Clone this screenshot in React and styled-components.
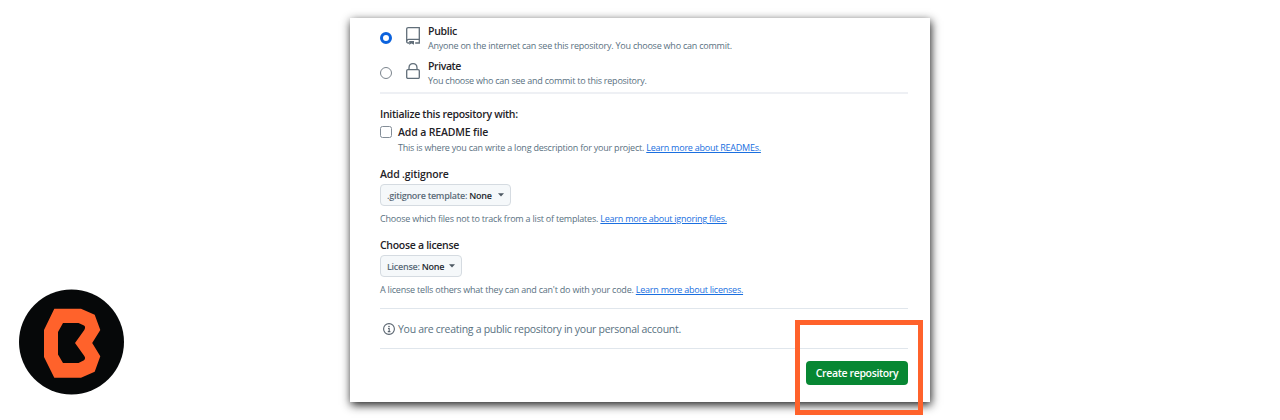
import React from "react";
import styled, { createGlobalStyle } from "styled-components";

const GlobalStyle = createGlobalStyle`
  * { box-sizing: border-box; }
  body {
    margin: 0;
    background: #fff;
    font-family: "Open Sans", "Noto Sans", sans-serif;
    color: #1f2328;
  }
  svg { display: block; flex: none; }
`;

const Page = styled.main`
  position: relative;
  width: 1280px;
  height: 420px;
  padding: 18px 350px;
  overflow: hidden;
`;

const Logo = styled.svg`
  position: absolute;
  left: 19px;
  top: 289px;
`;

const Panel = styled.section`
  width: 580px;
  height: 384px;
  padding: 5px 22px 0 30px;
  background: #fff;
  box-shadow: 1px 3px 9px rgba(0, 0, 0, 0.9);
`;

const Title = styled.div`
  height: 15px;
  line-height: 15px;
  font-size: 10.5px;
  font-weight: 600;
  letter-spacing: ${(p) => p.$track ?? -0.3}px;
  white-space: nowrap;
`;

const Note = styled.div`
  height: 14px;
  line-height: 14px;
  font-size: 9px;
  color: #59717f;
  letter-spacing: ${(p) => p.$track ?? -0.21}px;
  white-space: nowrap;
`;

const Link = styled.a`
  color: #1a6fe0;
  text-decoration: underline;
  text-underline-offset: 1px;
  letter-spacing: -0.24px;
`;

const Option = styled.label`
  display: grid;
  grid-template-columns: 26px 22px 1fr;
  align-items: center;
  height: 30px;
  margin-bottom: ${(p) => (p.$last ? 4 : 5)}px;
  svg { margin-bottom: 4px; }
`;

const Radio = styled.span`
  width: 12px;
  height: 12px;
  border-radius: 50%;
  background: #fff;
  border: ${(p) => (p.$on ? "3.5px solid #0b62dd" : "1px solid #7b848d")};
`;

const Divider = styled.hr`
  height: ${(p) => p.$h || 1}px;
  margin: 0;
  border: 0;
  background: ${(p) => p.$color || "#e0e6ec"};
`;

const Group = styled.div`
  margin-top: ${(p) => p.$top}px;
`;

const CheckRow = styled.label`
  display: grid;
  grid-template-columns: 18px 1fr;
  margin-top: 3px;
`;

const CheckText = styled.div`
  display: grid;
  gap: 1px;
`;

const Checkbox = styled.span`
  width: 12px;
  height: 12px;
  margin-top: 1px;
  border: 1px solid #838d97;
  border-radius: 2.5px;
  background: #fff;
`;

const Select = styled.button`
  display: flex;
  align-items: center;
  justify-content: space-between;
  width: ${(p) => p.$w}px;
  height: 22px;
  margin: 2px 0 6px;
  padding: 0 6px;
  border: 1px solid #d5dbe1;
  border-radius: 4px;
  background: #f5f8fa;
  font: 600 9px "Open Sans", "Noto Sans", sans-serif;
  letter-spacing: -0.27px;
  color: #5b6b78;
  white-space: nowrap;
  b { font-weight: 600; color: #24292f; }
`;

const Info = styled.div`
  display: flex;
  align-items: center;
  gap: 3px;
  height: 39px;
  padding: 1px 0 0 3px;
  font-size: 10.5px;
  line-height: 14px;
  letter-spacing: -0.28px;
  color: #59717f;
  white-space: nowrap;
  span { padding-bottom: 1px; }
`;

const Actions = styled.div`
  display: flex;
  justify-content: flex-end;
  padding-top: 12px;
`;

const Submit = styled.button`
  width: 102px;
  height: 24px;
  padding: 0;
  border: 0;
  border-radius: 4px;
  background: #078733;
  color: #fff;
  font: 600 10.5px/24px "Open Sans", "Noto Sans", sans-serif;
  letter-spacing: -0.35px;
  white-space: nowrap;
`;

const Highlight = styled.div`
  position: absolute;
  left: 795px;
  top: 320px;
  width: 128px;
  height: 95px;
  border: 5px solid #ff622b;
`;

const RepoIcon = () => (
  <svg width="14" height="18" viewBox="0 0 14 18" fill="none" stroke="#616e79" strokeWidth="1.3">
    <path d="M3 16H2.2Q.7 16 .7 14.5V2.2Q.7.7 2.2.7H13.3V16H9.2" />
    <path d="M.7 14.2Q.8 12.4 2.6 12.4H13.3" />
    <path d="M3.2 14H8V17.8L5.6 16.4 3.2 17.8Z" fill="#616e79" stroke="none" />
  </svg>
);

const LockIcon = () => (
  <svg width="14" height="16" viewBox="0 0 14 16" fill="none" stroke="#616e79" strokeWidth="1.3">
    <rect x=".7" y="6.6" width="12.6" height="8.8" rx="1.2" />
    <path d="M3 6.6V4.7Q3.2.7 7 .7T11 4.7V6.6" />
  </svg>
);

const InfoIcon = () => (
  <svg width="12" height="12" viewBox="0 0 12 12" fill="none" stroke="#59646f" strokeWidth="1.1">
    <circle cx="6" cy="6" r="5.4" />
    <path d="M5 5.5H6.2V8.5M4.8 8.6H7.4" />
    <circle cx="6" cy="3.6" r=".8" fill="#59646f" stroke="none" />
  </svg>
);

const Caret = () => (
  <svg width="6" height="4" viewBox="0 0 6 4">
    <path d="M0 .3H6L3 3.5Z" fill="#4c5862" />
  </svg>
);

export default function App() {
  return (
    <>
      <GlobalStyle />
      <Page>
        <Logo width="106" height="106" viewBox="0 0 106 106">
          <circle cx="52.5" cy="53" r="52.5" fill="#060809" />
          <path
            fillRule="evenodd"
            fill="#ff622b"
            d="M35.3 19.7H62L75.7 25.7 81.3 41 73.2 54 81.3 67.3 75.7 82.7 62 88.8H35.3L25 68V41ZM44 34L39 43V65.5L44 74H59.5L65 71.3Q67 69.5 65.3 67L56 54 65.3 41Q67 38 65 36.6L59.5 34Z"
          />
        </Logo>
        <Panel>
          <Option>
            <Radio $on />
            <RepoIcon />
            <div>
              <Title>Public</Title>
              <Note $track={-0.23}>Anyone on the internet can see this repository. You choose who can commit.</Note>
            </div>
          </Option>
          <Option $last>
            <Radio />
            <LockIcon />
            <div>
              <Title $track={-0.4}>Private</Title>
              <Note $track={-0.24}>You choose who can see and commit to this repository.</Note>
            </div>
          </Option>
          <Divider $h={2} $color="#eef0f4" />
          <Group $top={13}>
            <Title>Initialize this repository with:</Title>
            <CheckRow>
              <Checkbox />
              <CheckText>
                <Title $track={-0.15}>Add a README file</Title>
                <Note $track={-0.22}>
                  This is where you can write a long description for your project. <Link>Learn more about READMEs.</Link>
                </Note>
              </CheckText>
            </CheckRow>
          </Group>
          <Group $top={12}>
            <Title $track={-0.16}>Add .gitignore</Title>
            <Select $w={131}>
              <span>.gitignore template: <b>None</b></span>
              <Caret />
            </Select>
            <Note>
              Choose which files not to track from a list of templates. <Link>Learn more about ignoring files.</Link>
            </Note>
          </Group>
          <Group $top={12}>
            <Title>Choose a license</Title>
            <Select $w={82}>
              <span>License: <b>None</b></span>
              <Caret />
            </Select>
            <Note>
              A license tells others what they can and can't do with your code. <Link>Learn more about licenses.</Link>
            </Note>
          </Group>
          <Group $top={11}>
            <Divider />
            <Info>
              <InfoIcon />
              <span>You are creating a public repository in your personal account.</span>
            </Info>
            <Divider />
          </Group>
          <Actions>
            <Submit>Create repository</Submit>
          </Actions>
        </Panel>
        <Highlight />
      </Page>
    </>
  );
}
